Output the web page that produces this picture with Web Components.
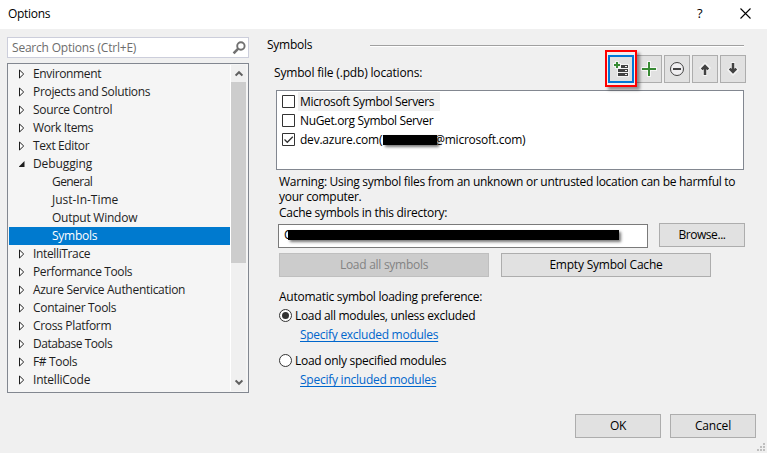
<!DOCTYPE html>
<html lang="en"><head><meta charset="utf-8"><title>Options</title>
<style>
html,body{margin:0;height:100%;overflow:hidden}
body{font:12px "Open Sans","Noto Sans",sans-serif;font-stretch:94%;color:#000;background:#f0f0f0}
</style></head><body>
<options-dialog></options-dialog>
<script>
function define(name, html, init){
  const t=document.createElement('template'); t.innerHTML=html;
  customElements.define(name, class extends HTMLElement{
    connectedCallback(){
      if(this.shadowRoot) return;
      this.attachShadow({mode:'open'}).append(t.content.cloneNode(true));
      if(init) init(this,this.shadowRoot);
    }
  });
}
// Label whose tracking is adjusted so that its first line has the width given in w.
define('fit-text',`<style>:host{display:inline-block;white-space:pre;flex:none}span{display:inline-block}:host([link]) span{color:#0066cc;text-decoration:underline;text-underline-offset:2px;text-decoration-thickness:1px;text-decoration-skip-ink:none}</style><span><slot></slot></span>`,(h,r)=>{
  const s=r.querySelector('span'), w=+h.getAttribute('w'), n=h.textContent.split('\n')[0].length;
  if(w&&n>1) s.style.letterSpacing=((w+.2-s.getBoundingClientRect().width)/n).toFixed(3)+'px';
});
define('title-bar',`<style>:host{display:flex;height:29px;background:#fff;align-items:center;padding-left:8px;box-sizing:border-box}
div{flex:1;line-height:28px;height:29px}.q{font-size:13px;line-height:27px;width:6px;height:29px;margin-right:37px}svg{margin:-3px 16px 0 0}</style>
<div><fit-text w="42">Options</fit-text></div><span class="q">?</span>
<svg width="11" height="11" viewBox="0 0 11 11"><path d="M.5 .5l10 10M10.5 .5l-10 10" stroke="#000" stroke-width="1.1"/></svg>`);
define('search-box',`<style>:host{display:flex;width:242px;height:21px;box-sizing:border-box;background:#fff;border:1px solid #ccceDB;align-items:center;justify-content:space-between;padding:0 2px 0 4px;color:#6d6d6d;line-height:20px}</style>
<fit-text w="124">Search Options (Ctrl+E)</fit-text><svg width="14" height="14" viewBox="0 0 14 14" fill="none" stroke="#717171"><circle cx="8.9" cy="5" r="3.7" stroke-width="1.9"/><path d="M6.2 7.7L1.6 12.3" stroke-width="2.6"/></svg>`);
define('tree-view',`<style>:host{display:flex;width:242px;height:330px;box-sizing:border-box;border:1px solid #828790;background:#f5f5f5;padding:1px 2px 1px 1px}
.rows{width:221px;flex:none}.bar{margin-left:1px;width:15px;background:#f0f0f0;box-shadow:-1px 0 #fff;display:flex;flex-direction:column;align-items:center}
.thumb{width:15px;height:181px;background:#cdcdcd}.up{height:17px;display:flex;align-items:center}.down{margin-top:auto;height:17px;display:flex;align-items:center}
.row{display:flex;height:18px;align-items:center;padding-left:10px;box-sizing:border-box;color:#1e1e1e;line-height:18px}.row svg{width:8px;height:10px;margin-right:6px;flex:none}
.child{padding-left:43px}.sel{background:#007acf;color:#fff}</style><div class="rows"></div>
<div class="bar"><span class="up"><svg width="8" height="7" viewBox="0 0 8 7"><path d="M.6 5.6L4 2.2l3.4 3.4" fill="none" stroke="#606060" stroke-width="2"/></svg></span><div class="thumb"></div><span class="down"><svg width="8" height="7" viewBox="0 0 8 7"><path d="M.6 1.4L4 4.8l3.4-3.4" fill="none" stroke="#606060" stroke-width="2"/></svg></span></div>`,(h,r)=>{
  const c='<svg viewBox="0 0 8 10"><path d="M.5 1v8L4.700 5z" fill="#fff" stroke="#1e1e1e"/></svg>', o='<svg viewBox="0 0 8 10"><path d="M5.500 2v6h-6z" fill="#1e1e1e"/></svg>';
  r.querySelector('.rows').innerHTML=[['Environment',68],['Projects and Solutions',117],['Source Control',79],['Work Items',60],['Text Editor',56],['Debugging',59,'open'],['General',40,'child'],['Just-In-Time',66,'child'],['Output Window',85,'child'],['Symbols',45,'child sel'],['IntelliTrace',57],['Performance Tools',99],['Azure Service Authentication',152],['Container Tools',83],['Cross Platform',78],['Database Tools',79],['F# Tools',44],['IntelliCode',57]]
  .map(([t,w,k=''])=>`<div class="row ${k}">${k.includes('child')?'':k?o:c}<fit-text w="${w}">${t}</fit-text></div>`).join('');
});
define('push-button',`<style>:host{display:flex;box-sizing:border-box;width:86px;height:24px;border:1px solid #adadad;background:#e1e1e1;align-items:center;justify-content:center;line-height:22px;flex:none}
:host([wide]){width:210px}:host([disabled]){background:#ccc;border-color:#bfbfbf;color:#838383}</style><slot></slot>`);
define('tool-button',`<style>:host{display:flex;box-sizing:border-box;width:26px;height:28px;border:1px solid #adadad;background:#e1e1e1;align-items:center;justify-content:center;position:relative}
:host([focused]){border:2px solid #0078d7}:host([focused])::after{content:"";position:absolute;left:-5px;top:-7px;width:28px;height:33px;border:2px solid #f00;box-shadow:3px 3px 3px #0006;z-index:1}</style><slot></slot>`);
define('tool-strip',`<style>:host{display:flex;gap:2px}svg{display:block}</style>
<tool-button focused><svg width="16" height="16" viewBox="0 0 16 16"><path d="M0 2h2V0h4v2h2v1h8v13H4V8H2V6H0z" fill="#f3f3f3"/><path d="M8 4h7v3H8zM5 8h10v3H5zM5 12h10v3H5z" fill="#424242"/><path d="M12 5h2v1h-2zM12 9h2v1h-2zM12 13h2v1h-2z" fill="#f3f3f3"/><path d="M1 4h6M4 1v6" stroke="#388a34" stroke-width="2"/></svg></tool-button>
<tool-button><svg width="16" height="16" viewBox="0 0 16 16"><path d="M8 0v16M0 8h16" stroke="#f6f6f6" stroke-width="4"/><path d="M8 1v14M1 8h14" stroke="#388a34" stroke-width="2"/></svg></tool-button>
<tool-button><svg width="16" height="16" viewBox="0 0 16 16"><circle cx="8" cy="8" r="6.5" fill="#f0eff1" stroke="#424242"/><path d="M4 8h8" stroke="#424242" stroke-width="2"/></svg></tool-button>
<tool-button><svg width="16" height="16" viewBox="0 0 16 16" fill="none"><path d="M8 15V4M3.500 8.500L8 4l4.500 4.500" stroke="#f3f3f3" stroke-width="4.400"/><path d="M8 14V5M4.700 8.300L8 5l3.300 3.300" stroke="#424242" stroke-width="2.500"/></svg></tool-button>
<tool-button><svg width="16" height="16" viewBox="0 0 16 16" fill="none"><path d="M8 1v11M3.500 7.500L8 12l4.500-4.500" stroke="#f3f3f3" stroke-width="4.400"/><path d="M8 2v9M4.700 7.700L8 11l3.300-3.300" stroke="#424242" stroke-width="2.500"/></svg></tool-button>`);
define('check-item',`<style>:host{display:flex;height:19px;align-items:center;padding-left:5px}svg{flex:none;margin-right:3px}
.l{height:19px;line-height:19px;padding:0 6px 0 2px;display:flex}:host([hot]) .l{background:#f0f0f0}.t{display:none}:host([checked]) .t{display:block}</style>
<svg width="13" height="13" viewBox="0 0 13 13"><path d="M.5 .5h12v12H.5z" fill="#fff" stroke="#333"/><path class="t" d="M2.500 6.500l2.800 2.800 5.500-5.600" fill="none" stroke="#333" stroke-width="1.300"/></svg><span class="l"><slot></slot></span>`);
define('black-bar',`<style>:host{display:block;position:absolute;background:#000;box-shadow:2px 2px 3px #0008}</style>`);
define('location-list',`<style>:host{display:block;box-sizing:border-box;width:468px;height:80px;border:1px solid #828790;background:#fff;padding-top:1px;margin-left:276px}.gap{display:inline-block;width:52px;position:relative}
black-bar{left:1px;top:5px;width:54px;height:10px}</style>
<check-item hot><fit-text w="134">Microsoft Symbol Servers</fit-text></check-item><check-item><fit-text w="133">NuGet.org Symbol Server</fit-text></check-item>
<check-item checked><fit-text w="82">dev.azure.com(</fit-text><span class="gap"><black-bar></black-bar></span><fit-text w="91">@microsoft.com)</fit-text></check-item>`);
define('path-field',`<style>:host{display:block;position:relative;box-sizing:border-box;width:370px;height:24px;border:1px solid #7a7a7a;background:#fff;padding-left:5px;line-height:20px}black-bar{left:9px;top:5px;width:331px;height:10px}</style>C<black-bar></black-bar>`);
define('radio-item',`<style>:host{display:flex;align-items:center;height:19px;line-height:19px;gap:3px}.d{display:none}:host([checked]) .d{display:block}</style><svg width="13" height="13" viewBox="0 0 13 13"><circle cx="6.500" cy="6.500" r="6" fill="#fff" stroke="#333"/><circle class="d" cx="6.500" cy="6.500" r="3.500" fill="#333"/></svg><slot></slot>`);
define('symbols-page',`<style>:host{display:flex;flex-direction:column;flex:1;--inset:30px}
.head{display:flex;align-items:center;height:18px;margin:7px 0 0 18px;line-height:18px}.rule{height:1px;width:374px;background:#a0a0a0;box-shadow:0 1px #fff}.head fit-text{width:103px}
.tools{display:flex;align-items:flex-start;height:35px;margin:1px 0 0 25px}.tools fit-text{width:334px;line-height:18px;margin-top:9px}
location-list{margin-left:27px}
.warn{margin:4px 0 0 var(--inset);line-height:15px;height:32px}.cache{margin:-2px 0 0 var(--inset);line-height:18px;height:19px}
.path{display:flex;margin:1px 0 0 29px;gap:11px;height:24px;align-items:flex-start}.path push-button{margin-top:-1px}
.btns{display:flex;gap:12px;margin:5px 0 0 var(--inset)}.auto{margin:11px 0 0 var(--inset);height:18px;line-height:18px}
radio-item{margin:0 0 0 var(--inset)}.link{margin:1px 0 0 51px;height:18px;line-height:18px}.second{margin-top:7px}
</style>
<div class="head"><fit-text w="45">Symbols</fit-text><div class="rule"></div></div>
<div class="tools"><fit-text w="148">Symbol file (.pdb) locations:</fit-text><tool-strip></tool-strip></div>
<location-list></location-list>
<div class="warn"><fit-text w="456">Warning: Using symbol files from an unknown or untrusted location can be harmful to
your computer.</fit-text></div>
<div class="cache"><fit-text w="168">Cache symbols in this directory:</fit-text></div>
<div class="path"><path-field></path-field><push-button><fit-text w="47">Browse...</fit-text></push-button></div>
<div class="btns"><push-button wide disabled><fit-text w="88">Load all symbols</fit-text></push-button><push-button wide><fit-text w="113">Empty Symbol Cache</fit-text></push-button></div>
<div class="auto"><fit-text w="203">Automatic symbol loading preference:</fit-text></div>
<radio-item checked><fit-text w="180">Load all modules, unless excluded</fit-text></radio-item>
<div class="link"><fit-text link w="138">Specify excluded modules</fit-text></div>
<radio-item class="second"><fit-text w="151">Load only specified modules</fit-text></radio-item>
<div class="link"><fit-text link w="136">Specify included modules</fit-text></div>`);
define('options-dialog',`<style>:host{display:flex;flex-direction:column;width:767px;height:453px;background:#f0f0f0;overflow:hidden}
.main{display:flex;height:385px;flex:none}.left{display:flex;flex-direction:column;gap:5px;padding:8px 0 0 7px;flex:none}.foot{display:flex;gap:9px;justify-content:flex-end;padding-right:11px}
.grip{align-self:flex-end;margin:5px 2px 0 0}</style>
<title-bar></title-bar><div class="main"><div class="left"><search-box></search-box><tree-view></tree-view></div><symbols-page></symbols-page></div>
<div class="foot"><push-button><fit-text w="16">OK</fit-text></push-button><push-button><fit-text w="36">Cancel</fit-text></push-button></div>
<svg class="grip" width="8" height="8" viewBox="0 0 8 8" fill="#bfbfbf"><path d="M6 0h2v2H6zM3 3h2v2H3zM6 3h2v2H6zM0 6h2v2H0zM3 6h2v2H3zM6 6h2v2H6z"/></svg>`);
</script></body></html>
